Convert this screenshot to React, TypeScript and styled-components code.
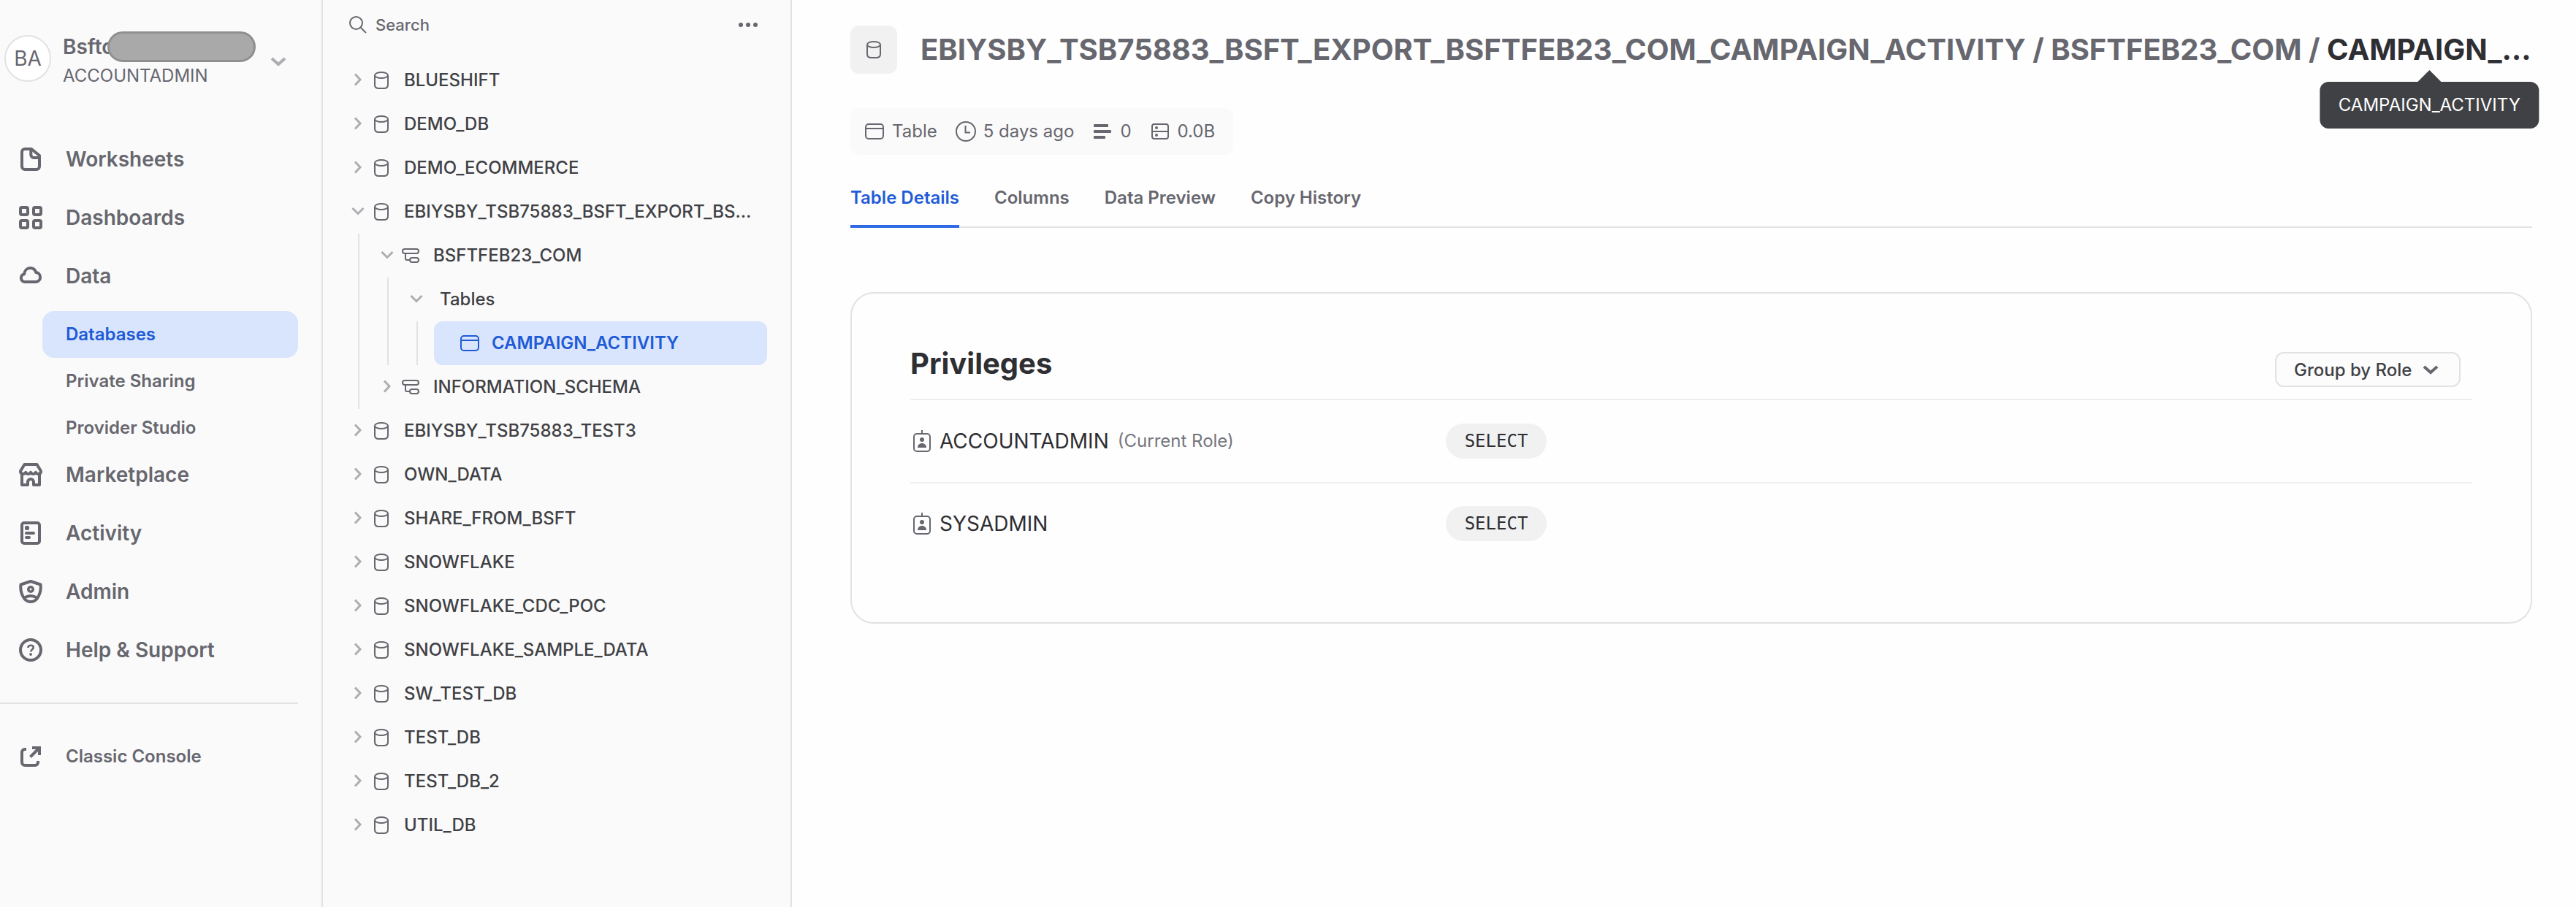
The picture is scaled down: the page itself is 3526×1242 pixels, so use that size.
import React from "react";
import styled, { createGlobalStyle, css } from "styled-components";

const color = {
  text: "#2e2e33",
  label: "#404145",
  muted: "#67676f",
  faint: "#adadb2",
  line: "#e2e2e3",
  softLine: "#efeff0",
  panel: "#fafafa",
  chip: "#f1f1f1",
  blue: "#1f5bd6",
  blueBar: "#2f6ae4",
  blueSoft: "#d9e5fd",
  tooltip: "#404145",
};

const GlobalStyle = createGlobalStyle`
  *, *::before, *::after { box-sizing: border-box; }
  body { margin: 0; background: #fefefe; }
  body, button, input, select, table {
    font-family: Inter, "Liberation Sans", Arial, sans-serif;
  }
  button {
    border: 0;
    padding: 0;
    margin: 0;
    background: none;
    color: inherit;
    text-align: left;
    cursor: pointer;
  }
  a { color: inherit; text-decoration: none; }
  ul { list-style: none; margin: 0; padding: 0; }
  svg { display: block; flex: none; }
`;

/* ---------- icons ---------- */

const Glyph = ({
  w = 32,
  h = 32,
  stroke = 4,
  children,
}: {
  w?: number;
  h?: number;
  stroke?: number;
  children: React.ReactNode;
}) => (
  <svg
    width={w}
    height={h}
    viewBox={`0 0 ${w} ${h}`}
    fill="none"
    stroke="currentColor"
    strokeWidth={stroke}
    strokeLinejoin="round"
    aria-hidden="true"
  >
    {children}
  </svg>
);

const WorksheetIcon = () => (
  <Glyph>
    <path d="M4 6a4 4 0 0 1 4-4h9L28 11v15a4 4 0 0 1-4 4H8a4 4 0 0 1-4-4z" />
    <path d="M16.3 2v8a4 4 0 0 0 4 4H28" />
  </Glyph>
);

const DashboardIcon = () => (
  <Glyph>
    <rect x="2" y="2" width="10" height="10" rx="2" />
    <rect x="20" y="2" width="10" height="10" rx="2" />
    <rect x="2" y="20" width="10" height="10" rx="2" />
    <rect x="20" y="20" width="10" height="10" rx="2" />
  </Glyph>
);

const CloudIcon = () => (
  <Glyph>
    <path d="M8 24a5.4 5.4 0 0 1-.8-10.7C7.6 8.4 11 5 15.4 5c3.9 0 6.9 2.5 7.9 6.1A6.5 6.5 0 0 1 23.5 24z" />
  </Glyph>
);

const MarketIcon = () => (
  <Glyph>
    <path d="M7.5 2h17L30 11c0 2.6-1.6 4-3.6 4-1.8 0-3-.8-3.6-2.2-.7 1.4-1.9 2.2-3.4 2.2s-2.7-.8-3.4-2.2c-.7 1.4-1.9 2.2-3.4 2.2s-2.7-.8-3.4-2.2C8.6 14.2 7.4 15 5.6 15 3.6 15 2 13.6 2 11z" />
    <path d="M4 15v15h8v-4a4 4 0 0 1 8 0v4h8V15" />
  </Glyph>
);

const ActivityIcon = () => (
  <Glyph>
    <rect x="4" y="2" width="24" height="28" rx="3" />
    <rect x="8" y="6" width="6" height="6" rx="2" fill="currentColor" stroke="none" />
    <path d="M10 16h10M10 22h4" strokeLinecap="round" />
  </Glyph>
);

const AdminIcon = () => (
  <Glyph>
    <path d="M16 2 29.5 6.5C30.5 14 28 21 24.5 26 22 29 19 30 16 30s-6-1-8.5-4C4 21 1.5 14 2.5 6.5z" />
    <circle cx="16" cy="13" r="3.2" strokeWidth="3.6" />
    <path d="M8 24.5c4.5-3.5 11.5-3.5 16 0" />
  </Glyph>
);

const HelpIcon = () => (
  <Glyph>
    <circle cx="16" cy="16" r="14" />
    <path d="M12.3 13c.2-2.2 1.7-3.3 3.8-3.3s3.7 1.2 3.7 3.1c0 2.3-3.7 2.6-3.7 5.6" strokeWidth="2.6" />
    <circle cx="16.1" cy="22" r="1.9" fill="currentColor" stroke="none" />
  </Glyph>
);

const ExternalIcon = () => (
  <Glyph>
    <g strokeLinejoin="miter">
      <path d="M10 6H8a4 4 0 0 0-4 4v14a4 4 0 0 0 4 4h14a4 4 0 0 0 4-4v-2" />
      <path d="M18 4h10v10M28 4 15.5 16.5" />
    </g>
  </Glyph>
);

const SearchIcon = () => (
  <Glyph w={24} h={24} stroke={2}>
    <circle cx="9.5" cy="9.5" r="8.5" />
    <path d="m15.5 15.5 7.5 7.5" />
  </Glyph>
);

const DatabaseIcon = () => (
  <Glyph w={24} h={24} stroke={2}>
    <ellipse cx="12" cy="5" rx="9" ry="4" />
    <path d="M3 5v13c0 3.5 2 5 5.5 5h7c3.5 0 5.5-1.5 5.5-5V5" />
  </Glyph>
);

const SchemaIcon = () => (
  <Glyph w={24} h={24} stroke={2}>
    <rect x="1" y="3" width="22" height="6" rx="3" />
    <path d="M5 9v7a2 2 0 0 0 2 2h4" />
    <rect x="11" y="15" width="12" height="6" rx="3" />
  </Glyph>
);

const TableIcon = () => (
  <Glyph w={26} h={22} stroke={2}>
    <rect x="1" y="1" width="24" height="20" rx="4" />
    <path d="M1 7h24" />
  </Glyph>
);

const ClockIcon = () => (
  <Glyph w={28} h={28} stroke={2}>
    <circle cx="14" cy="14" r="13" />
    <path d="M13.5 6v9.5h6.5" strokeLinejoin="miter" />
  </Glyph>
);

const RowsIcon = () => (
  <Glyph w={24} h={20}>
    <g fill="currentColor" stroke="none">
      <rect width="20" height="4" rx="1" />
      <rect y="8" width="24" height="4" rx="1" />
      <rect y="16" width="16" height="4" rx="1" />
    </g>
  </Glyph>
);

const StorageIcon = () => (
  <Glyph w={24} h={22} stroke={2}>
    <rect x="1" y="1" width="22" height="20" rx="3" />
    <path d="M1 11h22" />
    <circle cx="7" cy="6" r="2" fill="currentColor" stroke="none" />
    <circle cx="7" cy="16" r="2" fill="currentColor" stroke="none" />
  </Glyph>
);

const BadgeIcon = () => (
  <Glyph w={24} h={30} stroke={2}>
    <path d="M12 0v4" />
    <rect x="1" y="5" width="22" height="24" rx="4" />
    <g fill="currentColor" stroke="none">
      <circle cx="12" cy="13" r="3" />
      <path d="M6 24c0-3.5 2.500-6 6-6s6 2.500 6 6z" />
    </g>
  </Glyph>
);

const ChevronDown = () => (
  <svg width="22" height="13" viewBox="0 0 22 13" fill="none" stroke="currentColor" strokeWidth="4" aria-hidden="true">
    <path d="m2 2 9 8 9-8" />
  </svg>
);

const ChevronRight = () => (
  <Glyph w={20} h={18} stroke={3}>
    <path d="m6 1.5 7 7.5-7 7.5" strokeLinejoin="miter" />
  </Glyph>
);

const ChevronOpen = () => (
  <Glyph w={20} h={18} stroke={3}>
    <path d="m2.5 5 7.5 7.5L17.5 5" strokeLinejoin="miter" />
  </Glyph>
);

const DotsIcon = () => (
  <svg width="28" height="8" viewBox="0 0 28 8" fill="currentColor" aria-hidden="true">
    <circle cx="4" cy="4" r="3" />
    <circle cx="14" cy="4" r="3" />
    <circle cx="24" cy="4" r="3" />
  </svg>
);

/* ---------- shell ---------- */

const Shell = styled.div`
  display: flex;
  min-height: 100vh;
  color: ${color.text};
`;

const Sidebar = styled.aside`
  flex: 0 0 442px;
  padding: 48px 32px 0 0;
  background: ${color.panel};
  border-right: 2px solid ${color.line};
  color: ${color.muted};
`;

const Account = styled.button`
  display: flex;
  align-items: center;
  gap: 16px;
  width: 100%;
  padding: 0 16px 0 6px;
  color: ${color.muted};
`;

const Avatar = styled.span`
  display: grid;
  place-items: center;
  align-self: flex-start;
  width: 64px;
  height: 64px;
  border: 2px solid ${color.line};
  border-radius: 50%;
  background: #fff;
  font-size: 28px;
  line-height: 32px;
`;

const AccountText = styled.span`
  display: flex;
  flex: 1;
  flex-direction: column;
  gap: 8px;
  font-size: 24px;
  line-height: 32px;
`;

const AccountName = styled.span`
  position: relative;
  font-size: 28px;
  font-weight: 600;
`;

const Redaction = styled.span`
  position: absolute;
  left: 61px;
  top: -5px;
  width: 203px;
  height: 42px;
  border: 3px solid #8f8f8f;
  border-radius: 21px;
  background: #a9a9a9;
`;

const AccountChevron = styled.span`
  color: ${color.faint};
`;

const Nav = styled.nav`
  padding-top: 66px;
`;

const NavItem = styled.li`
  margin-bottom: 16px;
`;

const NavLink = styled.a<{ $small?: boolean }>`
  display: flex;
  align-items: center;
  gap: 32px;
  height: 64px;
  padding-left: 26px;
  font-size: ${(p) => (p.$small ? 24 : 28)}px;
  font-weight: 600;
  line-height: 32px;
`;

const NavIcon = styled.span`
  width: 32px;
`;

const SubList = styled.ul`
  margin: 16px 0 -16px 58px;
`;

const SubLink = styled.a<{ $active?: boolean }>`
  display: flex;
  align-items: center;
  height: 64px;
  padding-left: 32px;
  border-radius: 16px;
  font-size: 24px;
  font-weight: 600;
  line-height: 32px;
  ${(p) =>
    p.$active &&
    css`
      background: ${color.blueSoft};
      color: ${color.blue};
    `}
`;

const Divider = styled.hr`
  height: 2px;
  margin: 40px 0;
  border: 0;
  background: ${color.line};
`;

/* ---------- object tree ---------- */

const Explorer = styled.section`
  flex: 0 0 642px;
  min-width: 0;
  background: ${color.panel};
  border-right: 2px solid ${color.line};
`;

const SearchBar = styled.div`
  display: flex;
  align-items: center;
  gap: 12px;
  height: 68px;
  margin-bottom: 12px;
  padding: 0 44px 0 36px;
  color: ${color.muted};
`;

const SearchInput = styled.input`
  flex: 1;
  min-width: 0;
  padding: 0;
  border: 0;
  outline: 0;
  background: none;
  color: ${color.text};
  font-size: 22px;
  font-weight: 500;
  line-height: 32px;
  &::placeholder {
    color: ${color.muted};
    opacity: 1;
  }
`;

const Tree = styled.ul`
  padding: 0 32px 0 10px;
  color: ${color.label};
`;

const Branch = styled.ul`
  margin-left: 38px;
  border-left: 2px solid ${color.line};
`;

const TreeRow = styled.button`
  display: flex;
  align-items: center;
  gap: 10px;
  width: 100%;
  height: 60px;
  padding: 0 16px 0 28px;
  font-size: 24px;
  font-weight: 500;
  line-height: 32px;
  color: ${color.label};
`;

const TreeChevron = styled.span`
  padding-bottom: 2px;
  color: ${color.faint};
`;

const TreeIcon = styled.span`
  margin-right: 9px;
  color: ${color.muted};
`;

const TreeLabel = styled.span<{ $bare?: boolean }>`
  flex: 1;
  min-width: 0;
  padding-left: ${(p) => (p.$bare ? 12 : 0)}px;
  overflow: hidden;
  text-overflow: ellipsis;
  white-space: nowrap;
`;

const TreeLeaf = styled.li`
  padding-left: 22px;
`;

const LeafButton = styled.button`
  display: flex;
  align-items: center;
  gap: 17px;
  width: 100%;
  height: 60px;
  padding-left: 36px;
  border-radius: 12px;
  background: ${color.blueSoft};
  color: ${color.blue};
  font-size: 24px;
  font-weight: 600;
  line-height: 32px;
`;

/* ---------- detail ---------- */

const Detail = styled.main`
  flex: 1;
  min-width: 0;
  padding: 35px 60px 60px 80px;
`;

const Header = styled.header`
  display: flex;
  align-items: center;
  gap: 32px;
  margin-bottom: 47px;
`;

const HeaderIcon = styled.span`
  display: grid;
  flex: none;
  place-items: center;
  width: 64px;
  height: 66px;
  border-radius: 12px;
  background: ${color.chip};
  color: ${color.muted};
`;

const Crumbs = styled.h1`
  display: flex;
  flex: 1;
  min-width: 0;
  margin: 0;
  color: ${color.muted};
  font-size: 40px;
  font-weight: 700;
  line-height: 48px;
  white-space: pre;
`;

const CurrentCrumb = styled.span`
  position: relative;
  flex: 1;
  min-width: 0;
  color: ${color.text};
`;

const CrumbText = styled.span`
  display: block;
  overflow: hidden;
  text-overflow: ellipsis;
`;

const Tooltip = styled.span`
  position: absolute;
  top: 68px;
  left: 50%;
  transform: translateX(-50%);
  padding: 16px 25px;
  border-radius: 12px;
  background: ${color.tooltip};
  color: #fff;
  font-size: 24px;
  font-weight: 400;
  line-height: 32px;
  &::before {
    content: "";
    position: absolute;
    top: -16px;
    left: 50%;
    margin-left: -16px;
    border: 16px solid transparent;
    border-top: 0;
    border-bottom-color: ${color.tooltip};
  }
`;

const Meta = styled.ul`
  display: flex;
  align-items: center;
  gap: 25px;
  width: fit-content;
  height: 64px;
  padding: 0 25px 0 19px;
  border-radius: 12px;
  background: ${color.panel};
  color: ${color.muted};
  font-size: 24px;
  line-height: 32px;
`;

const MetaItem = styled.li`
  display: flex;
  align-items: center;
  gap: 10px;
`;

const MetaIcon = styled.span`
  display: grid;
  place-items: center;
  width: 28px;
`;

const Tabs = styled.div`
  display: flex;
  gap: 48px;
  margin: 43px 0 88px;
  box-shadow: inset 0 -2px ${color.line};
`;

const Tab = styled.button<{ $active?: boolean }>`
  padding-bottom: 21px;
  border-bottom: 4px solid ${(p) => (p.$active ? color.blueBar : "transparent")};
  color: ${(p) => (p.$active ? color.blue : color.muted)};
  font-size: 24px;
  font-weight: 600;
  line-height: 32px;
`;

const Card = styled.section`
  padding: 48px 80px 80px;
  border: 2px solid ${color.line};
  border-radius: 32px;
`;

const CardHeader = styled.div`
  display: flex;
  align-items: flex-end;
  justify-content: space-between;
  padding: 24px 16px 16px 0;
  border-bottom: 2px solid ${color.softLine};
`;

const CardTitle = styled.h2`
  margin: 0;
  padding-bottom: 8px;
  font-size: 40px;
  font-weight: 700;
  line-height: 48px;
`;

const SelectBox = styled.label`
  display: grid;
  align-items: center;
  color: ${color.muted};
  > * {
    grid-area: 1 / 1;
  }
  > svg {
    justify-self: end;
    margin-right: 30px;
    pointer-events: none;
  }
`;

const Select = styled.select`
  appearance: none;
  height: 48px;
  padding: 0 64px 0 24px;
  border: 2px solid ${color.line};
  border-radius: 12px;
  background: #fcfcfc;
  color: ${color.label};
  font-size: 24px;
  font-weight: 500;
`;

const RoleTable = styled.table`
  width: 100%;
  border-spacing: 0;
  table-layout: fixed;
  tr + tr > * {
    border-top: 2px solid ${color.softLine};
  }
`;

const RoleCell = styled.th`
  width: calc(100% / 3);
  height: 112px;
  padding: 0 0 0 4px;
  text-align: left;
  font-size: 28px;
  font-weight: 400;
  line-height: 32px;
`;

const Role = styled.span`
  display: flex;
  align-items: center;
  gap: 12px;
  white-space: nowrap;
  > svg {
    color: ${color.muted};
  }
`;

const RoleNote = styled.span`
  color: #75757d;
  font-size: 24px;
`;

const PrivilegeCell = styled.td`
  padding: 0 0 0 20px;
`;

const Pill = styled.span`
  display: inline-block;
  height: 48px;
  padding: 0 26px;
  border-radius: 24px;
  background: ${color.chip};
  font-family: "DejaVu Sans Mono", "Liberation Mono", monospace;
  font-size: 24px;
  line-height: 48px;
  vertical-align: middle;
`;

/* ---------- data and composition ---------- */

const navAfterData = [
  { label: "Marketplace", icon: <MarketIcon /> },
  { label: "Activity", icon: <ActivityIcon /> },
  { label: "Admin", icon: <AdminIcon /> },
  { label: "Help & Support", icon: <HelpIcon /> },
];

const databasesBefore = ["BLUESHIFT", "DEMO_DB", "DEMO_ECOMMERCE"];
const databasesAfter = [
  "EBIYSBY_TSB75883_TEST3",
  "OWN_DATA",
  "SHARE_FROM_BSFT",
  "SNOWFLAKE",
  "SNOWFLAKE_CDC_POC",
  "SNOWFLAKE_SAMPLE_DATA",
  "SW_TEST_DB",
  "TEST_DB",
  "TEST_DB_2",
  "UTIL_DB",
];

const roles = [
  { name: "ACCOUNTADMIN", note: "(Current Role)", privilege: "SELECT" },
  { name: "SYSADMIN", privilege: "SELECT" },
];

const NavEntry = ({
  label,
  icon,
  children,
}: {
  label: string;
  icon: React.ReactNode;
  children?: React.ReactNode;
}) => (
  <NavItem>
    <NavLink href="#">
      <NavIcon>{icon}</NavIcon>
      {label}
    </NavLink>
    {children}
  </NavItem>
);

const TreeNode = ({
  label,
  icon,
  children,
}: {
  label: string;
  icon?: React.ReactNode;
  children?: React.ReactNode;
}) => (
  <li>
    <TreeRow type="button" aria-expanded={Boolean(children)}>
      <TreeChevron>{children ? <ChevronOpen /> : <ChevronRight />}</TreeChevron>
      {icon && <TreeIcon>{icon}</TreeIcon>}
      <TreeLabel $bare={!icon}>{label}</TreeLabel>
    </TreeRow>
    {children && <Branch>{children}</Branch>}
  </li>
);

export default function App() {
  return (
    <>
      <GlobalStyle />
      <Shell>
        <Sidebar>
          <Account type="button">
            <Avatar>BA</Avatar>
            <AccountText>
              <AccountName>
                Bsftc
                <Redaction />
              </AccountName>
              <span>ACCOUNTADMIN</span>
            </AccountText>
            <AccountChevron>
              <ChevronDown />
            </AccountChevron>
          </Account>
          <Nav>
            <ul>
              <NavEntry label="Worksheets" icon={<WorksheetIcon />} />
              <NavEntry label="Dashboards" icon={<DashboardIcon />} />
              <NavEntry label="Data" icon={<CloudIcon />}>
                <SubList>
                  <li>
                    <SubLink href="#" $active aria-current="page">
                      Databases
                    </SubLink>
                  </li>
                  <li>
                    <SubLink href="#">Private Sharing</SubLink>
                  </li>
                  <li>
                    <SubLink href="#">Provider Studio</SubLink>
                  </li>
                </SubList>
              </NavEntry>
              {navAfterData.map((item) => (
                <NavEntry key={item.label} {...item} />
              ))}
            </ul>
            <Divider />
            <NavLink href="#" $small>
              <NavIcon>
                <ExternalIcon />
              </NavIcon>
              Classic Console
            </NavLink>
          </Nav>
        </Sidebar>

        <Explorer aria-label="Databases">
          <SearchBar>
            <SearchIcon />
            <SearchInput type="text" placeholder="Search" aria-label="Search" />
            <button type="button" aria-label="More options">
              <DotsIcon />
            </button>
          </SearchBar>
          <Tree>
            {databasesBefore.map((name) => (
              <TreeNode key={name} label={name} icon={<DatabaseIcon />} />
            ))}
            <TreeNode
              label="EBIYSBY_TSB75883_BSFT_EXPORT_BSFTFEB23_COM_CAMPAIGN_ACTIVITY"
              icon={<DatabaseIcon />}
            >
              <TreeNode label="BSFTFEB23_COM" icon={<SchemaIcon />}>
                <TreeNode label="Tables">
                  <TreeLeaf>
                    <LeafButton type="button" aria-current="true">
                      <TableIcon />
                      CAMPAIGN_ACTIVITY
                    </LeafButton>
                  </TreeLeaf>
                </TreeNode>
              </TreeNode>
              <TreeNode label="INFORMATION_SCHEMA" icon={<SchemaIcon />} />
            </TreeNode>
            {databasesAfter.map((name) => (
              <TreeNode key={name} label={name} icon={<DatabaseIcon />} />
            ))}
          </Tree>
        </Explorer>

        <Detail>
          <Header>
            <HeaderIcon>
              <DatabaseIcon />
            </HeaderIcon>
            <Crumbs>
              <a href="#">EBIYSBY_TSB75883_BSFT_EXPORT_BSFTFEB23_COM_CAMPAIGN_ACTIVITY</a>
              <span>{" / "}</span>
              <a href="#">BSFTFEB23_COM</a>
              <span>{" / "}</span>
              <CurrentCrumb aria-describedby="crumb-tip">
                <CrumbText>CAMPAIGN_ACTIVITY</CrumbText>
                <Tooltip role="tooltip" id="crumb-tip">
                  CAMPAIGN_ACTIVITY
                </Tooltip>
              </CurrentCrumb>
            </Crumbs>
          </Header>

          <Meta>
            <MetaItem>
              <MetaIcon>
                <TableIcon />
              </MetaIcon>
              Table
            </MetaItem>
            <MetaItem>
              <MetaIcon>
                <ClockIcon />
              </MetaIcon>
              5 days ago
            </MetaItem>
            <MetaItem>
              <MetaIcon>
                <RowsIcon />
              </MetaIcon>
              0
            </MetaItem>
            <MetaItem>
              <MetaIcon>
                <StorageIcon />
              </MetaIcon>
              0.0B
            </MetaItem>
          </Meta>

          <Tabs role="tablist">
            <Tab type="button" role="tab" aria-selected="true" $active>
              Table Details
            </Tab>
            <Tab type="button" role="tab" aria-selected="false">
              Columns
            </Tab>
            <Tab type="button" role="tab" aria-selected="false">
              Data Preview
            </Tab>
            <Tab type="button" role="tab" aria-selected="false">
              Copy History
            </Tab>
          </Tabs>

          <Card>
            <CardHeader>
              <CardTitle>Privileges</CardTitle>
              <SelectBox>
                <Select aria-label="Group privileges" defaultValue="role">
                  <option value="role">Group by Role</option>
                </Select>
                <ChevronDown />
              </SelectBox>
            </CardHeader>
            <RoleTable aria-label="Privileges">
              <tbody>
                {roles.map((role) => (
                  <tr key={role.name}>
                    <RoleCell scope="row">
                      <Role>
                        <BadgeIcon />
                        {role.name}
                        {role.note && <RoleNote>{role.note}</RoleNote>}
                      </Role>
                    </RoleCell>
                    <PrivilegeCell>
                      <Pill>{role.privilege}</Pill>
                    </PrivilegeCell>
                  </tr>
                ))}
              </tbody>
            </RoleTable>
          </Card>
        </Detail>
      </Shell>
    </>
  );
}
